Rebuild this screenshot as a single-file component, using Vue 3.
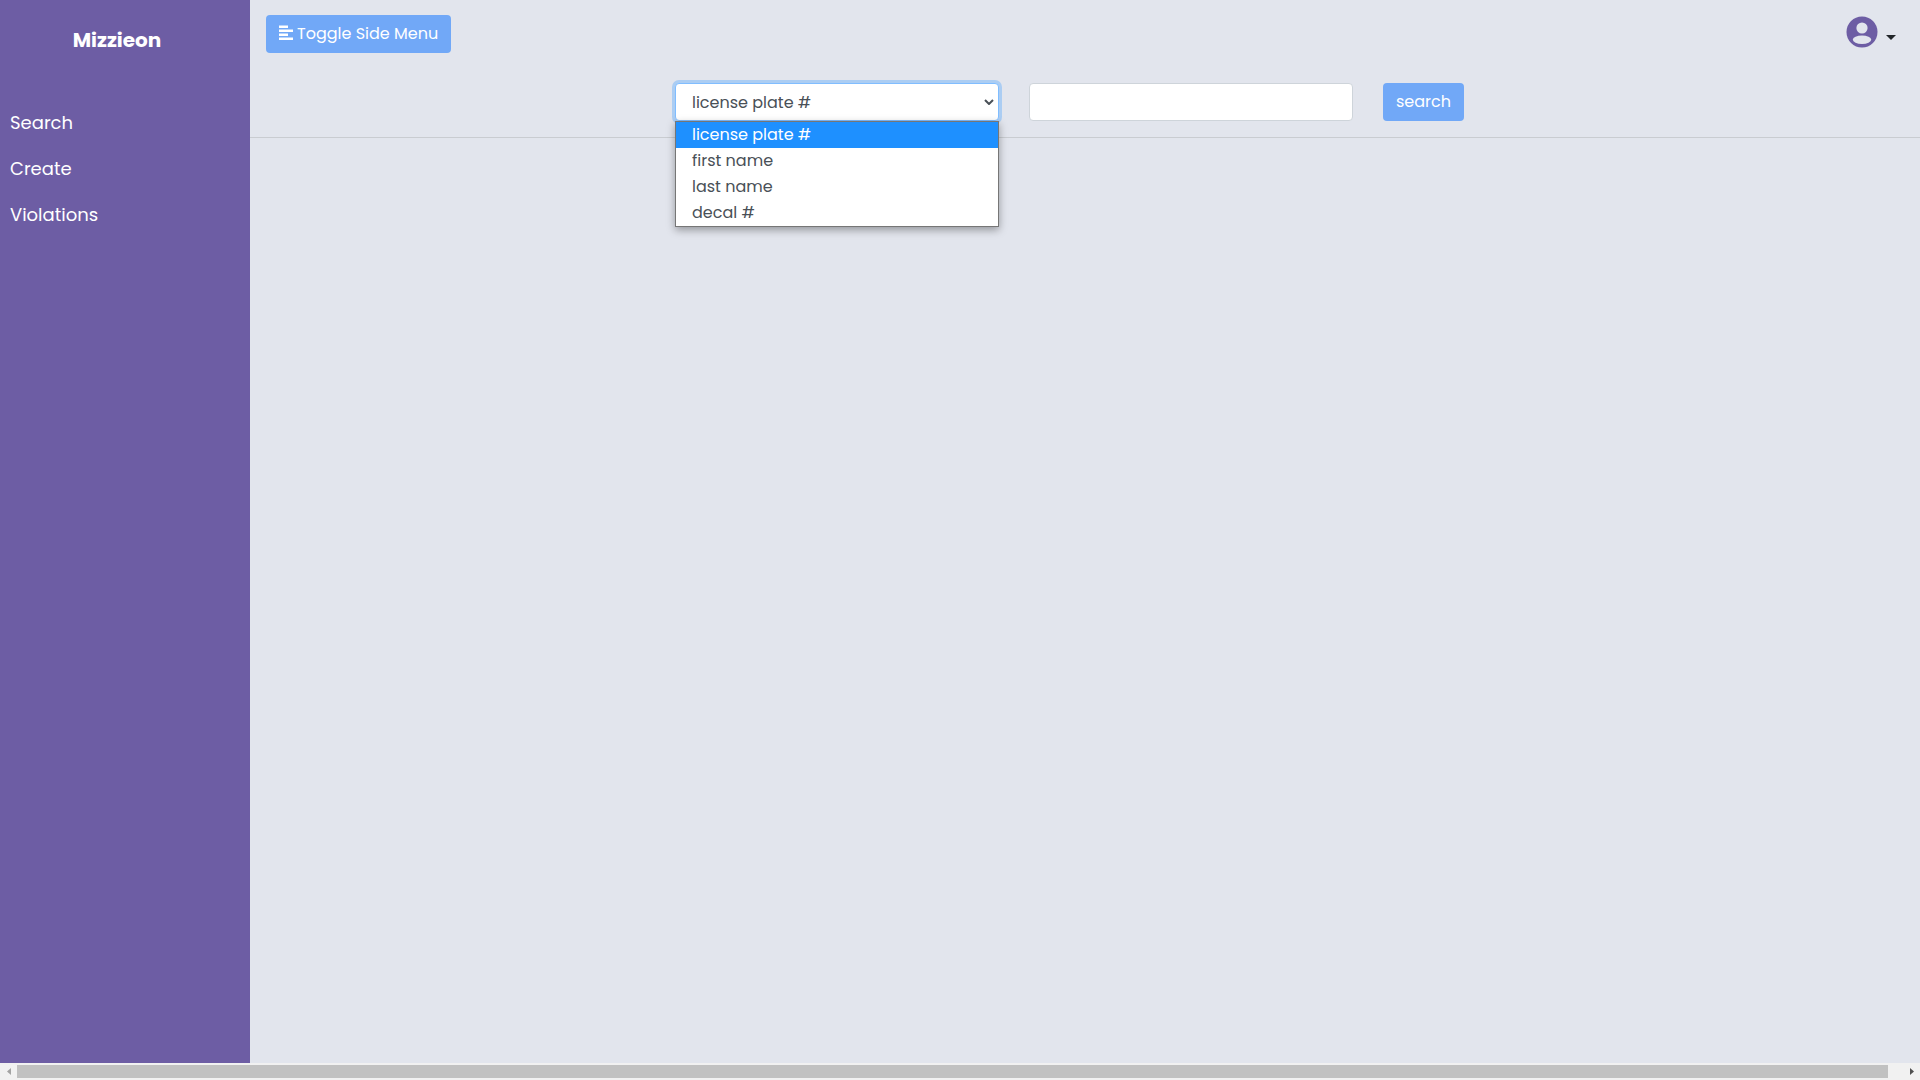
<script setup>
import { ref } from 'vue'

const links = ['Search', 'Create', 'Violations']
const fields = ['license plate #', 'first name', 'last name', 'decal #']
const field = ref(fields[0])
const term = ref('')
const menuOpen = ref(true)
const listOpen = ref(true)

function choose(name) {
  field.value = name
  listOpen.value = false
}
</script>

<template>
  <div class="page">
    <div class="wrapper">
      <aside v-show="menuOpen" class="sidebar">
        <h1 class="brand">Mizzieon</h1>
        <nav class="links">
          <a v-for="link in links" :key="link" href="#">{{ link }}</a>
        </nav>
      </aside>
      <main class="content">
        <header class="topbar">
          <button type="button" class="btn toggle" @click="menuOpen = !menuOpen">
            <svg class="align-icon" viewBox="0 0 14 18" aria-hidden="true">
              <path d="M0 .6h9V3H0zM0 4.6h14V7H0zM0 8.6h9V11H0zM0 12.6h14V15H0z" fill="#fff" />
            </svg>
            <span>Toggle Side Menu</span>
          </button>
          <button type="button" class="account" aria-label="Account">
            <svg class="avatar" viewBox="0 0 32 32" aria-hidden="true">
              <circle cx="16" cy="16" r="15.5" fill="#6d5da4" />
              <circle cx="16" cy="12" r="5.6" fill="#e2e5ed" />
              <ellipse cx="16" cy="23.8" rx="9.2" ry="4.2" fill="#e2e5ed" />
            </svg>
            <span class="caret"></span>
          </button>
        </header>
        <form class="search" @submit.prevent>
          <div class="picker">
            <select v-model="field" class="control" aria-label="Search by" @mousedown.prevent="listOpen = !listOpen">
              <option v-for="name in fields" :key="name">{{ name }}</option>
            </select>
            <svg class="chevron" viewBox="0 0 10 6" aria-hidden="true">
              <path d="M1 1l4 4 4-4" fill="none" stroke="#495057" stroke-width="2" />
            </svg>
            <ul v-if="listOpen" class="options" role="listbox" aria-label="Search by">
              <li
                v-for="name in fields"
                :key="name"
                role="option"
                :aria-selected="name === field"
                :class="{ active: name === field }"
                @click="choose(name)"
              >{{ name }}</li>
            </ul>
          </div>
          <input v-model="term" type="text" class="control" aria-label="Search term" />
          <button type="submit" class="btn submit">search</button>
        </form>
      </main>
    </div>
    <div class="scrollbar">
      <button type="button" class="arrow" aria-label="Scroll left">
        <svg viewBox="0 0 8 14" aria-hidden="true"><path d="M8 0v14L0 7z" fill="#a3a3a3" /></svg>
      </button>
      <div class="track"><div class="thumb"></div></div>
      <button type="button" class="arrow" aria-label="Scroll right">
        <svg viewBox="0 0 8 14" aria-hidden="true"><path d="M0 0v14l8-7z" fill="#505050" /></svg>
      </button>
    </div>
  </div>
</template>

<style>
body {
  margin: 0;
}
</style>

<style scoped>
.page,
.page * {
  box-sizing: border-box;
}
.page {
  min-height: 100vh;
  display: flex;
  flex-direction: column;
  background: #e2e5ed;
  color: #212529;
  font: 400 16px/24px Poppins, Inter, "Open Sans", sans-serif;
}
.wrapper {
  flex: 1;
  display: flex;
}
.sidebar {
  flex: 0 0 250px;
  background: #6d5da4;
  color: #fff;
}
.brand {
  margin: 0;
  padding: 28px 32px 28px 16px;
  font-size: 20px;
  line-height: 24px;
  font-weight: 700;
  text-align: center;
}
.links {
  display: flex;
  flex-direction: column;
  margin-top: 20px;
}
.links a {
  padding: 10px;
  color: #fff;
  font-size: 18px;
  line-height: 26px;
  text-decoration: none;
}
.content {
  flex: 1;
  min-width: 0;
}
.topbar {
  display: flex;
  justify-content: space-between;
  align-items: center;
  height: 68px;
  padding: 0 24px 0 16px;
}
button {
  border: 0;
  padding: 0;
  font: inherit;
  cursor: pointer;
}
.btn {
  height: 38px;
  border-radius: 4px;
  background: #71a8f7;
  color: #fff;
}
.toggle {
  display: flex;
  align-items: center;
  gap: 4px;
  padding: 0 13px;
}
.align-icon {
  width: 14px;
  height: 18px;
}
.account {
  display: flex;
  align-items: center;
  gap: 8px;
  padding-bottom: 4px;
  background: none;
}
.avatar {
  width: 32px;
  height: 32px;
}
.caret {
  margin-top: 10px;
  border: 5px solid transparent;
  border-top-color: #212529;
  border-bottom: 0;
}
.search {
  display: flex;
  justify-content: center;
  gap: 30px;
  padding: 15px 31px 16px 0;
  border-bottom: 1px solid #c9ccd1;
}
.picker {
  position: relative;
}
.control {
  display: block;
  width: 324px;
  height: 38px;
  padding: 0 16px;
  border: 1px solid #ced4da;
  border-radius: 4px;
  background: #fff;
  color: #495057;
  font: inherit;
  outline: 0;
}
select.control {
  appearance: none;
  padding-top: 2px;
  border-color: #80bdff;
  box-shadow: 0 0 0 3px #abcdf3;
}
.chevron {
  position: absolute;
  top: 16px;
  right: 5px;
  width: 10px;
  height: 6px;
  pointer-events: none;
}
.options {
  position: absolute;
  top: 100%;
  left: 0;
  width: 100%;
  margin: 0;
  padding: 0;
  border: 1px solid #767676;
  background: #fff;
  box-shadow: 0 3px 8px rgba(0, 0, 0, 0.35);
  color: #495057;
  line-height: 26px;
  list-style: none;
}
.options li {
  padding: 0 16px;
}
.options .active {
  background: #1e90ff;
  color: #fff;
}
.submit {
  padding: 0 13px;
}
.scrollbar {
  display: flex;
  height: 17px;
  background: #f1f1f1;
}
.arrow {
  display: flex;
  align-items: center;
  justify-content: center;
  width: 17px;
  background: none;
}
.arrow svg {
  width: 4px;
  height: 7px;
}
.track {
  flex: 1;
  padding: 2px 15px 2px 0;
}
.thumb {
  height: 13px;
  background: #c1c1c1;
}
</style>
